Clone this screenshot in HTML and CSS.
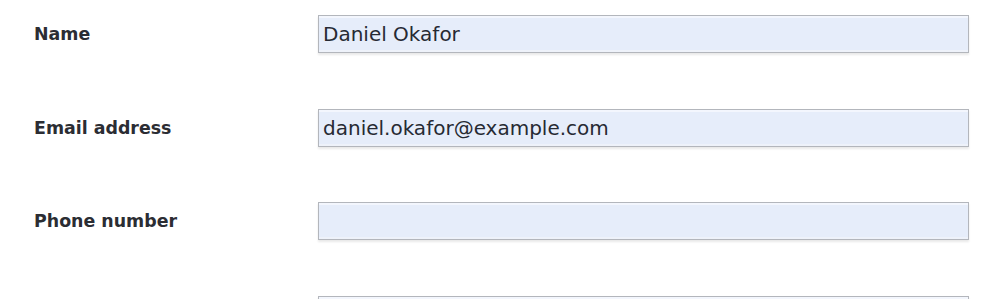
FILE: index.html
```html
<!DOCTYPE html>
<html lang="en">
<head>
<meta charset="utf-8">
<title>Contact form</title>
<link rel="stylesheet" href="styles.css">
</head>
<body>
<form class="form">
  <label class="label" for="name">Name</label>
  <input class="field" id="name" type="text" value="Daniel Okafor">
  <label class="label" for="email">Email address</label>
  <input class="field" id="email" type="text" value="daniel.okafor@example.com">
  <label class="label" for="phone">Phone number</label>
  <input class="field" id="phone" type="text" value="">
  <span class="label"></span>
  <input class="field" id="extra" type="text" value="" aria-label="Additional field">
</form>
</body>
</html>
```
FILE: styles.css
```css
html, body {
  margin: 0;
  padding: 0;
  background: #ffffff;
}
body {
  font-family: "DejaVu Sans", sans-serif;
  color: #2a2d34;
}
.form {
  display: grid;
  grid-template-columns: 284px 651px;
  row-gap: 55.6px;
  align-items: center;
  padding: 15px 0 0 34px;
}
.label {
  font-family: "DejaVu Sans", sans-serif;
  font-weight: bold;
  font-size: 17.4px;
  color: #2b2d33;
}
.field {
  box-sizing: border-box;
  height: 38px;
  margin: 0;
  padding: 0 4px;
  border: 1px solid #b3b6bc;
  border-radius: 0;
  background: #e6edfa;
  box-shadow: inset 0 2px 0 #f3f6fd, inset 0 -2px 0 #eef2fa, 0 2px 2px rgba(0,0,0,0.09);
  font-family: "DejaVu Sans", sans-serif;
  font-size: 20px;
  color: #262a33;
  outline: none;
}
```
